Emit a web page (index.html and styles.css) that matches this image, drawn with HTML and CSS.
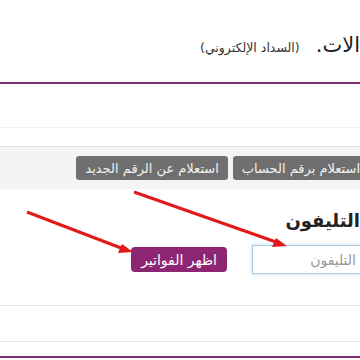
FILE: index.html
```html
<!DOCTYPE html>
<html lang="ar" dir="rtl">
<head>
    <meta charset="UTF-8">
    <meta name="viewport" content="width=device-width, initial-scale=1.0">
    <link rel="stylesheet" href="styles.css">
</head>
<body>
    <div class="page">
        <div class="top">
            <span class="title">الات.</span>
            <span class="sub">(السداد الإلكتروني)</span>
        </div>
        <div class="blank"></div>
        <div class="tabs">
            <button class="tab">استعلام برقم الحساب</button>
            <button class="tab">استعلام عن الرقم الجديد</button>
        </div>
        <div class="form">
            <h2 class="label">التليفون</h2>
            <div class="row">
                <input class="phone" type="text" placeholder="التليفون">
                <button class="show">اظهر الفواتير</button>
            </div>
        </div>
        <div class="line-a"></div>
        <div class="line-b"></div>

        <svg class="arrows" width="360" height="360" viewBox="0 0 360 360">
            <line x1="134" y1="192" x2="276" y2="242" stroke="#e0191b" stroke-width="3"/>
            <polygon points="287,246 272,247 276,238" fill="#e0191b"/>
            <line x1="27" y1="212" x2="121" y2="248" stroke="#e0191b" stroke-width="3"/>
            <polygon points="133,252 118,253 122,244" fill="#e0191b"/>
        </svg>
    </div>
</body>
</html>
```

FILE: styles.css
```css
body {
    margin: 0;
    overflow: hidden;
    font-family: "DejaVu Sans", sans-serif;
    background: #fff;
}
.page {
    position: relative;
    width: 360px;
    height: 360px;
    overflow: hidden;
}
.top {
    height: 84px;
    border-bottom: 2px solid #7e2f72;
    display: flex;
    align-items: baseline;
    gap: 16px;
    padding-top: 33px;
    box-sizing: border-box;
}
.title {
    font-size: 21px;
    color: #222;
}
.sub {
    font-size: 12.5px;
    color: #333;
}
.blank {
    height: 43px;
    border-bottom: 1px solid #f0f0f0;
    margin-bottom: 18px;
}
.tabs {
    border-top: 1px solid #e3e3e3;
    background: #f4f4f4;
    padding: 9px 0;
    margin-right: -9px;
    display: flex;
    gap: 5px;
}
.tab {
    height: 24px;
    padding: 0 9px;
    border: 0;
    border-radius: 3px;
    background: #6f6f6f;
    color: #f2f2f2;
    font-family: inherit;
    font-size: 13px;
}
.form {
    padding-top: 21px;
}
.label {
    margin: 0 0 13px;
    font-size: 18px;
    line-height: 22px;
    color: #222;
}
.row {
    display: flex;
    align-items: center;
    gap: 25px;
    margin-right: -12px;
}
.phone {
    width: 120px;
    height: 29px;
    box-sizing: border-box;
    border: 1px solid #a9cbe3;
    box-shadow: 0 0 4px rgba(120, 170, 220, 0.4);
    padding: 0 15px 0 10px;
    font-family: inherit;
    font-size: 14px;
    text-align: right;
}
.phone::placeholder {
    color: #999;
}
.show {
    height: 25px;
    padding: 0 10px;
    border: 0;
    border-radius: 4px;
    background: #8c2673;
    color: #fff;
    font-family: inherit;
    font-size: 14px;
}
.line-a {
    margin-top: 31px;
    height: 35px;
    border-top: 1px solid #e6e6e6;
}
.line-b {
    height: 14px;
    border-top: 1px solid #e6e6e6;
    border-bottom: 2px solid #7e2f72;
}
.arrows {
    position: absolute;
    left: 0;
    top: 0;
}
```
